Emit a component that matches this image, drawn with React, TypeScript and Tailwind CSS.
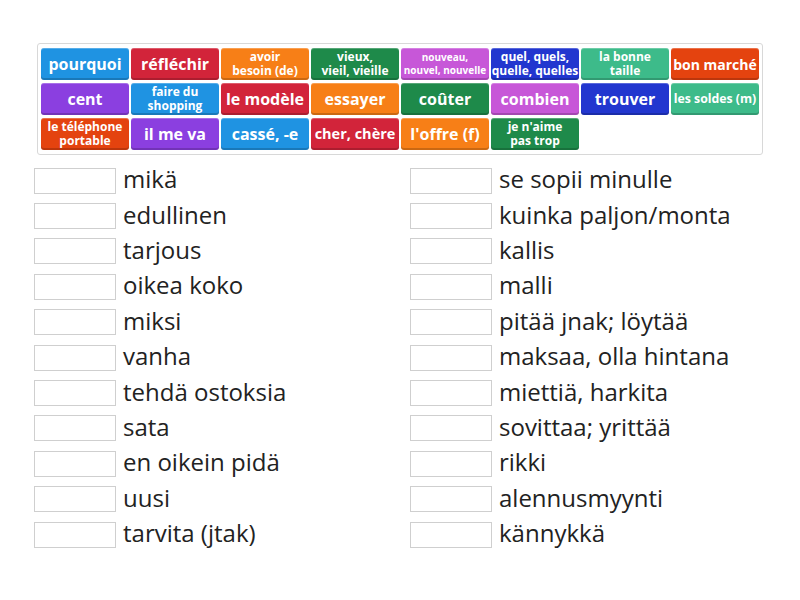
import React from 'react';

type Tile = { text: React.ReactNode; color: string; size: string };

const tiles: Tile[] = [
  { text: 'pourquoi', color: 'bg-[#1f93e2]', size: 'text-[16px]' },
  { text: 'réfléchir', color: 'bg-[#d2243a]', size: 'text-[16px]' },
  { text: <>avoir<br />besoin (de)</>, color: 'bg-[#f77f17]', size: 'text-[12px] leading-[14px]' },
  { text: <>vieux,<br />vieil, vieille</>, color: 'bg-[#1e8a4a]', size: 'text-[12px] leading-[14px]' },
  { text: <>nouveau,<br />nouvel, nouvelle</>, color: 'bg-[#c757d8]', size: 'text-[10px] leading-[13px]' },
  { text: <>quel, quels,<br />quelle, quelles</>, color: 'bg-[#2236cf]', size: 'text-[12px] leading-[14px]' },
  { text: <>la bonne<br />taille</>, color: 'bg-[#3dbb8a]', size: 'text-[12px] leading-[14px]' },
  { text: 'bon marché', color: 'bg-[#e4430f]', size: 'text-[14px]' },

  { text: 'cent', color: 'bg-[#8b3fe0]', size: 'text-[16px]' },
  { text: <>faire du<br />shopping</>, color: 'bg-[#1f93e2]', size: 'text-[12px] leading-[14px]' },
  { text: 'le modèle', color: 'bg-[#d2243a]', size: 'text-[16px]' },
  { text: 'essayer', color: 'bg-[#f77f17]', size: 'text-[16px]' },
  { text: 'coûter', color: 'bg-[#1e8a4a]', size: 'text-[16px]' },
  { text: 'combien', color: 'bg-[#c757d8]', size: 'text-[16px]' },
  { text: 'trouver', color: 'bg-[#2236cf]', size: 'text-[16px]' },
  { text: 'les soldes (m)', color: 'bg-[#3dbb8a]', size: 'text-[12.3px]' },

  { text: <>le téléphone<br />portable</>, color: 'bg-[#e4430f]', size: 'text-[12px] leading-[14px]' },
  { text: 'il me va', color: 'bg-[#8b3fe0]', size: 'text-[16px]' },
  { text: 'cassé, -e', color: 'bg-[#1f93e2]', size: 'text-[16px]' },
  { text: 'cher, chère', color: 'bg-[#d2243a]', size: 'text-[14.5px]' },
  { text: "l'offre (f)", color: 'bg-[#f77f17]', size: 'text-[16px]' },
  { text: <>je n'aime<br />pas trop</>, color: 'bg-[#1e8a4a]', size: 'text-[12px] leading-[14px]' },
];

const left = [
  'mikä',
  'edullinen',
  'tarjous',
  'oikea koko',
  'miksi',
  'vanha',
  'tehdä ostoksia',
  'sata',
  'en oikein pidä',
  'uusi',
  'tarvita (jtak)',
];

const right = [
  'se sopii minulle',
  'kuinka paljon/monta',
  'kallis',
  'malli',
  'pitää jnak; löytää',
  'maksaa, olla hintana',
  'miettiä, harkita',
  'sovittaa; yrittää',
  'rikki',
  'alennusmyynti',
  'kännykkä',
];

function AnswerColumn({ items }: { items: string[] }) {
  return (
    <div className="flex flex-col w-[376px]">
      {items.map((t) => (
        <div key={t} className="flex items-center h-[35.4px]">
          <div className="w-[82px] h-[26px] border border-[#cfcfcf] bg-white shrink-0" />
          <span className="ml-[7px] text-[24px] text-[#222] leading-none pb-[3px]">{t}</span>
        </div>
      ))}
    </div>
  );
}

export default function App() {
  return (
    <div
      className="w-[800px] h-[600px] bg-white overflow-hidden"
      style={{ fontFamily: '"Open Sans", "Noto Sans", sans-serif' }}
    >
      <div className="ml-[37px] mt-[43px] w-[726px] border border-[#d8d8d8] rounded-[3px] pt-[4px] pb-[4px] px-[3px]">
        <div className="flex flex-wrap gap-x-[2px] gap-y-[3px]">
          {tiles.map((t, i) => (
            <div
              key={i}
              className={`${t.color} ${t.size} w-[88px] h-[32px] rounded-[3px] flex items-center justify-center text-center text-white font-bold whitespace-nowrap shadow-[inset_0_1px_0_rgba(255,255,255,0.25),inset_0_-2px_0_rgba(0,0,0,0.18)]`}
            >
              <span>{t.text}</span>
            </div>
          ))}
        </div>
      </div>
      <div className="flex ml-[34px] mt-[8px]">
        <AnswerColumn items={left} />
        <AnswerColumn items={right} />
      </div>
    </div>
  );
}
